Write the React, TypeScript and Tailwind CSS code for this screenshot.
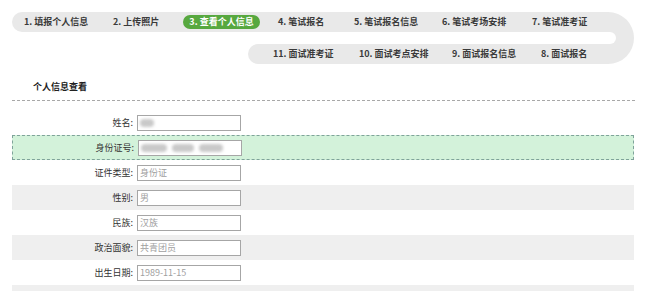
import { ReactNode } from "react";

const topSteps = [
  { label: "1. 填报个人信息", w: "w-[89px]" },
  { label: "2. 上传照片", w: "w-[70px]" },
  { label: "3. 查看个人信息", w: "w-[95px]", active: true },
  { label: "4. 笔试报名", w: "w-[76px]" },
  { label: "5. 笔试报名信息", w: "w-[88px]" },
  { label: "6. 笔试考场安排", w: "w-[90px]" },
  { label: "7. 笔试准考证", w: "w-[70px]" },
];

const bottomSteps = [
  { label: "11. 面试准考证", w: "w-[86px]" },
  { label: "10. 面试考点安排", w: "w-[93px]" },
  { label: "9. 面试报名信息", w: "w-[89px]" },
  { label: "8. 面试报名", w: "w-[60px]" },
];

type Row = {
  label: string;
  value: ReactNode;
  tone: "white" | "grey" | "green";
};

const Blur = ({ w }: { w: string }) => (
  <span className={`inline-block h-[8px] ${w} rounded-full bg-[#c9c9c9] blur-[1.5px]`} />
);

const rows: Row[] = [
  { label: "姓名:", value: <Blur w="w-[14px]" />, tone: "white" },
  {
    label: "身份证号:",
    value: (
      <span className="flex items-center gap-[5px]">
        <Blur w="w-[26px]" />
        <Blur w="w-[22px]" />
        <Blur w="w-[24px]" />
      </span>
    ),
    tone: "green",
  },
  { label: "证件类型:", value: "身份证", tone: "white" },
  { label: "性别:", value: "男", tone: "grey" },
  { label: "民族:", value: "汉族", tone: "white" },
  { label: "政治面貌:", value: "共青团员", tone: "grey" },
  { label: "出生日期:", value: "1989-11-15", tone: "white" },
  { label: "", value: "", tone: "grey" },
];

function StepItem({ label, w, active }: { label: string; w: string; active?: boolean }) {
  if (active) {
    return (
      <div className={`${w} flex items-center`}>
        <span className="flex h-[14px] w-[77px] items-center justify-center rounded-full bg-[#57a83f] text-white">
          {label}
        </span>
      </div>
    );
  }
  return <div className={`${w} shrink-0 whitespace-nowrap`}>{label}</div>;
}

export default function App() {
  return (
    <div
      className="h-[291px] w-[654px] overflow-hidden bg-white text-[#333]"
      style={{ fontFamily: '"Noto Sans CJK SC", "Liberation Sans", sans-serif' }}
    >
      {/* step track */}
      <div className="ml-[12px] mt-[12px] flex w-[622px] text-[9px] font-bold leading-[10px] text-[#3a3a3a]">
        <div className="flex w-[596px] flex-col gap-[12px]">
          <div className="flex h-[20px] items-center rounded-l-full bg-[#e9e9e9] pl-[12px]">
            {topSteps.map((s) => (
              <StepItem key={s.label} {...s} />
            ))}
          </div>
          <div className="ml-[236px] flex h-[20px] items-center rounded-l-full bg-[#e9e9e9] pl-[25px]">
            {bottomSteps.map((s) => (
              <StepItem key={s.label} {...s} />
            ))}
          </div>
        </div>
        <div className="h-[52px] w-[26px] rounded-r-[26px] bg-[#e9e9e9] pt-[20px]">
          <div className="h-[12px] w-[8px] rounded-r-full bg-white" />
        </div>
      </div>

      {/* section title */}
      <div className="mt-[18px] pl-[33px] text-[9px] font-bold leading-[10px] text-[#222]">个人信息查看</div>
      <div className="mx-[12px] mt-[8px] w-[623px] border-t border-dashed border-[#a8a8a8]" />

      {/* form */}
      <div className="mx-[12px] mt-[9px] w-[622px] text-[9px] leading-[10px]">
        {rows.map((r, i) => (
          <div
            key={i}
            className={`flex h-[25px] items-center ${
              r.tone === "grey"
                ? "bg-[#efefef]"
                : r.tone === "green"
                ? "border border-dashed border-[#7fa39a] bg-[#d3f2da]"
                : ""
            }`}
          >
            {r.label && (
              <>
                <div className="w-[122px] shrink-0 pr-[1px] text-right text-[#333]">{r.label}</div>
                <div className="ml-[3px] flex h-[16px] w-[104px] items-center border border-[#a6a6a6] bg-white px-[2px] text-[#a0a0a0]">
                  {r.value}
                </div>
              </>
            )}
          </div>
        ))}
      </div>
    </div>
  );
}
